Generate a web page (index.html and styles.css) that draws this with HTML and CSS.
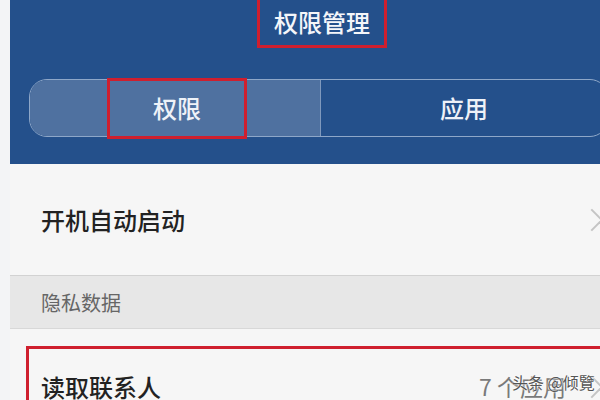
FILE: index.html
```html
<!DOCTYPE html>
<html lang="zh-CN">
<head>
    <meta charset="UTF-8">
    <meta name="viewport" content="width=device-width, initial-scale=1.0">
    <title>权限管理</title>
    <link rel="stylesheet" href="styles.css">
</head>
<body>
    <div class="screen">
        <!-- Top bar -->
        <div class="top-bar">
            <div class="title-row">
                <span class="title mark">权限管理</span>
            </div>
            <div class="tabs">
                <div class="tab tab-active">
                    <span class="tab-label mark">权限</span>
                </div>
                <div class="tab">
                    <span class="tab-label">应用</span>
                </div>
            </div>
        </div>

        <!-- List -->
        <div class="list">
            <div class="row">
                <span class="row-text">开机自动启动</span>
                <span class="chevron"></span>
            </div>
            <div class="section">隐私数据</div>
            <div class="row-wrap">
                <div class="row row-marked">
                    <span class="row-text">读取联系人</span>
                    <span class="row-value">7 个应用</span>
                    <span class="chevron"></span>
                </div>
            </div>
        </div>
        <div class="watermark">头条 @倾覽</div>
    </div>
</body>
</html>
```

FILE: styles.css
```css
/* General styles */
html, body {
    margin: 0;
    padding: 0;
    overflow: hidden;
}
body {
    background: #f3f4f6;
    font-family: "Noto Sans CJK SC", "Noto Sans", sans-serif;
}
.screen {
    position: relative;
    width: 616px;
    margin-left: 10px;
    height: 400px;
    background: #f6f6f6;
}

/* Annotation boxes */
.mark {
    border: 3px solid #cf1f2e;
    box-sizing: border-box;
}

/* Top bar */
.top-bar {
    height: 164px;
    background: #24508b;
    box-sizing: border-box;
    overflow: hidden;
}
.title-row {
    display: flex;
    justify-content: center;
    padding-left: 8px;
}
.title {
    display: flex;
    align-items: center;
    justify-content: center;
    width: 130px;
    height: 57px;
    margin-top: -9px;
    padding-top: 6px;
    border-top: none;
    color: #f4f6fa;
    font-size: 24px;
    font-weight: 500;
}
.tabs {
    display: flex;
    margin: 31px 18px 0 19px;
    height: 58px;
    border: 1px solid #8ea7c8;
    border-radius: 18px;
    box-sizing: border-box;
}
.tab {
    flex: 1;
    display: flex;
    align-items: center;
    justify-content: center;
    color: #eef2f8;
    font-size: 24px;
    font-weight: 500;
}
.tab-active {
    flex: 0 0 290px;
    background: #4f71a0;
    border-radius: 17px 0 0 17px;
    border-right: 1px solid #7f99bd;
}
.tab-label {
    padding-bottom: 2px;
}
.tab-active .tab-label {
    display: flex;
    align-items: center;
    justify-content: center;
    width: 140px;
    height: 61px;
    margin: -2px 0 -3px 4px;
}

/* List */
.row {
    display: flex;
    align-items: center;
    height: 111px;
    padding: 0 26px 0 31px;
    color: #222;
    font-size: 24px;
    font-weight: 500;
}
.row-text {
    flex: 1;
}
.section {
    display: flex;
    align-items: center;
    height: 54px;
    padding-left: 31px;
    background: #e7e7e7;
    border-top: 1px solid #d2d2d2;
    border-bottom: 1px solid #d8d8d8;
    color: #666;
    font-size: 20px;
    box-sizing: border-box;
}
.row-wrap {
    padding: 17px 0 0 16px;
}
.row-marked {
    height: 90px;
    padding-left: 12px;
    align-items: flex-start;
    padding-top: 20px;
    border: 3px solid #cf1f2e;
    border-right: none;
    box-sizing: border-box;
}
.row-value {
    color: #7a7a7a;
    font-size: 23px;
    font-weight: 400;
    margin-right: 14px;
}
.chevron {
    width: 14px;
    height: 14px;
    border-top: 2px solid #c4c4c4;
    border-right: 2px solid #c4c4c4;
    transform: rotate(45deg);
    margin-left: 4px;
}
.row-marked .chevron {
    margin-top: 10px;
}
.watermark {
    position: absolute;
    left: 502px;
    top: 370px;
    color: #555;
    font-size: 16px;
    text-shadow: 0 0 2px #fff, 0 0 2px #fff;
}
```
